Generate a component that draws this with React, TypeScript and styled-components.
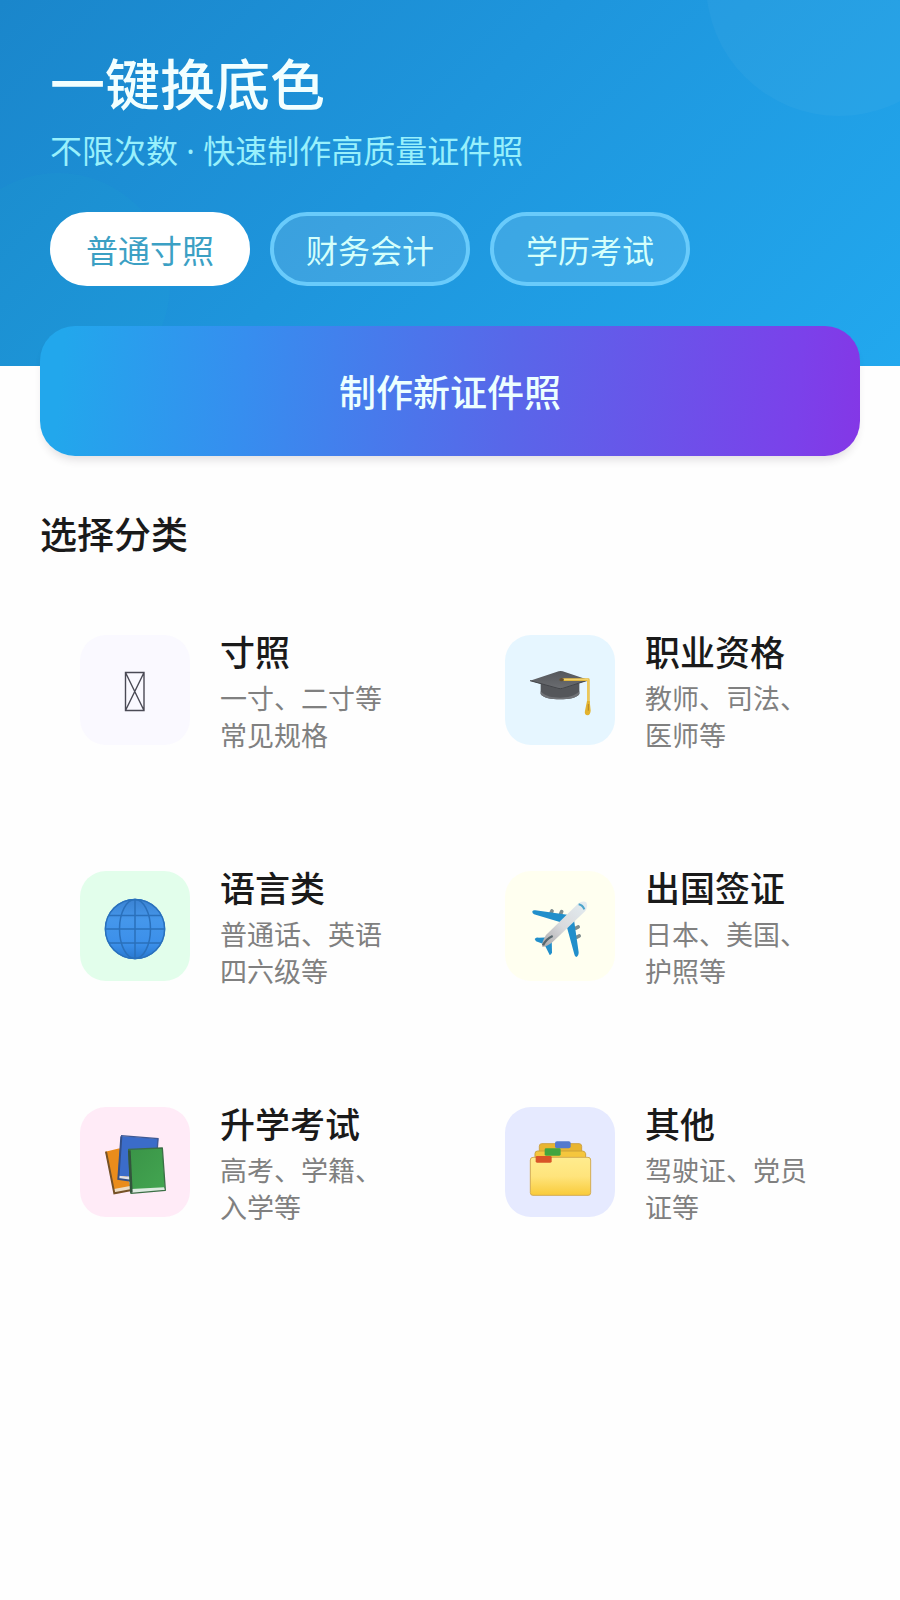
import React, { useState } from "react";
import styled, { createGlobalStyle } from "styled-components";

type Category = {
  id: string;
  title: string;
  description: string;
  background: string;
  icon: React.ReactNode;
};

type ChipProps = {
  $active: boolean;
};

type IconTileProps = {
  $background: string;
};

const GlobalStyle = createGlobalStyle`
  * {
    box-sizing: border-box;
  }

  body {
    margin: 0;
    background: #fefefe;
    color: #1a1a1a;
    font-family: "Noto Sans CJK SC", "Noto Sans", sans-serif;
  }

  button {
    font-family: inherit;
    cursor: pointer;
  }
`;

const Hero = styled.header`
  position: relative;
  overflow: hidden;
  padding: 48px 50px 80px;
  background: linear-gradient(135deg, #1a86cb 0%, #1e95dc 45%, #22a8ee 100%);

  &::before,
  &::after {
    content: "";
    position: absolute;
    border-radius: 50%;
  }

  &::before {
    top: -150px;
    right: -72px;
    width: 266px;
    height: 266px;
    background: rgba(255, 255, 255, 0.03);
  }

  &::after {
    left: -54px;
    bottom: -31px;
    width: 224px;
    height: 224px;
    background: rgba(60, 220, 200, 0.04);
  }
`;

const HeroContent = styled.div`
  position: relative;
  z-index: 1;
`;

const HeroTitle = styled.h1`
  margin: 0;
  font-size: 55px;
  font-weight: 500;
  line-height: 66px;
  color: #f2ffff;
`;

const HeroSubtitle = styled.p`
  margin: 14px 0 38px;
  font-family: "Noto Sans", "Noto Sans CJK SC", sans-serif;
  font-size: 32px;
  line-height: 46px;
  color: #98f0fc;
`;

const Chips = styled.div`
  display: flex;
  flex-wrap: wrap;
  gap: 20px;
`;

const Chip = styled.button<ChipProps>`
  padding: 0 32px;
  border: 4px solid ${(props) => (props.$active ? "#ffffff" : "#69cbfb")};
  border-radius: 37px;
  background: ${(props) => (props.$active ? "#ffffff" : "rgba(255, 255, 255, 0.13)")};
  color: ${(props) => (props.$active ? "#3ba0c4" : "#d4fffb")};
  font-size: 32px;
  line-height: 66px;
`;

const Main = styled.main`
  position: relative;
  z-index: 1;
  margin-top: -40px;
  padding: 0 40px 40px;
`;

const CreateButton = styled.button`
  display: block;
  width: 100%;
  padding: 0;
  border: 0;
  border-radius: 35px;
  background: linear-gradient(
    95deg,
    #22a7ec 3%,
    #368eef 25%,
    #5867e9 57%,
    #7b41ea 92%,
    #8437e6 100%
  );
  box-shadow: 0 7px 8px -3px rgba(60, 40, 60, 0.14);
  color: #ecffff;
  font-size: 37px;
  font-weight: 500;
  line-height: 130px;
`;

const SectionTitle = styled.h2`
  margin: 50px 0 26px;
  font-size: 37px;
  font-weight: 500;
  line-height: 55px;
`;

const CategoryGrid = styled.nav`
  display: grid;
  grid-template-columns: repeat(2, 1fr);
  gap: 30px;
`;

const CategoryCard = styled.a`
  display: flex;
  align-items: center;
  gap: 30px;
  padding: 40px;
  color: inherit;
  text-decoration: none;
`;

const IconTile = styled.span<IconTileProps>`
  display: flex;
  flex-shrink: 0;
  align-items: center;
  justify-content: center;
  width: 110px;
  height: 110px;
  border-radius: 26px;
  background: ${(props) => props.$background};

  svg {
    width: 64px;
    height: 64px;
    overflow: visible;
  }
`;

const CardText = styled.div`
  min-width: 0;
`;

const CardTitle = styled.h3`
  margin: 0 0 4px;
  font-size: 35px;
  font-weight: 500;
  line-height: 48px;
`;

const CardDescription = styled.p`
  margin: 0;
  font-size: 27px;
  line-height: 37px;
  color: #808080;
`;

const EmptyGlyphIcon = () => (
  <svg viewBox="0 -1 64 64" fill="none" stroke="#4a4a55" strokeWidth="1.4" aria-hidden="true">
    <path d="M22.5 13.5h18.5v38h-18.5zM22.5 13.5l18.5 38M41 13.5l-18.5 38" />
  </svg>
);

const GraduationIcon = () => (
  <svg viewBox="84 84 192 192" aria-hidden="true">
    <defs>
      <linearGradient id="cap" x1="0" y1="0" x2="0" y2="1">
        <stop offset="0" stopColor="#55575b" />
        <stop offset="1" stopColor="#6b6d71" />
      </linearGradient>
    </defs>
    <path d="M122 160v32c8 12 32 16 58 16s50-4 58-16v-32z" fill="#54565a" />
    <path d="M122 184c14 16 36 19 58 19s44-4 58-19v8c-8 12-32 16-58 16s-50-4-58-16z" fill="#707276" />
    <path d="M90 152 176 124q6-2 12 0l78 26-78 26q-7 2-14 0z" fill="url(#cap)" />
    <path d="M90 152 174 175q7 2 14 0l78-25" fill="none" stroke="#434549" strokeWidth="3" />
    <path d="M186 149h79v70" fill="none" stroke="#e3b83f" strokeWidth="8" strokeLinejoin="round" />
    <path d="M190 148h74v66" fill="none" stroke="#f6d875" strokeWidth="3" />
    <ellipse cx="185" cy="149" rx="7" ry="5" fill="#66502f" />
    <path d="M261 213h8l3 29q-1 12-9 14-11-2-8-14z" fill="#e3b32f" />
    <path d="M265 222v20" stroke="#b2852b" strokeWidth="3" />
  </svg>
);

const GlobeIcon = () => (
  <svg viewBox="0 -3 64 64" aria-hidden="true">
    <defs>
      <linearGradient id="globe" x1="0" y1="0" x2="0" y2="1">
        <stop offset="0" stopColor="#3b82d2" />
        <stop offset="0.35" stopColor="#4597eb" />
        <stop offset="0.75" stopColor="#3b8fea" />
        <stop offset="1" stopColor="#2877ce" />
      </linearGradient>
    </defs>
    <circle cx="32" cy="32" r="30.300" fill="url(#globe)" />
    <g fill="none" stroke="#2a70bb" strokeWidth="1.500">
      <circle cx="32" cy="32" r="29.600" />
      <ellipse cx="32" cy="32" rx="15.500" ry="29.400" />
      <path d="M32 2.500v59M2.500 32h59M6 18.500h52M6 46h52" />
    </g>
  </svg>
);

const PlaneIcon = () => (
  <svg viewBox="84 87 192 192" aria-hidden="true">
    <defs>
      <linearGradient id="fuselage" x1="1" y1="0" x2="0" y2="1">
        <stop offset="0" stopColor="#e4edf1" />
        <stop offset="0.55" stopColor="#d9dadd" />
        <stop offset="1" stopColor="#aaa8aa" />
      </linearGradient>
    </defs>
    <g fill="#7f8d8e">
      <rect x="149" y="132" width="11" height="18" rx="5" transform="rotate(25 154 141)" />
      <rect x="178" y="134" width="11" height="18" rx="5" transform="rotate(25 183 143)" />
      <rect x="226" y="178" width="11" height="18" rx="5" transform="rotate(65 231 187)" />
      <rect x="229" y="205" width="11" height="18" rx="5" transform="rotate(65 234 214)" />
    </g>
    <path d="M97 139q2-4 9-3l96 13-20 23-80-24q-6-3-5-9z" fill="#218fcb" />
    <path d="M200 184 222 164 236 262q0 11-7 14-5-1-6-8z" fill="#218fcb" />
    <path d="M104 222q5-5 12-4l38-1-18 22-28-10z" fill="#218fcb" />
    <path d="M133 238 155 220 156 262q-2 9-7 8z" fill="#218fcb" />
    <path d="M138 210 234 116q14-10 25-4 6 12-3 26L158 231q-20 16-31 14-5-8 11-35z" fill="url(#fuselage)" />
    <path d="M236 118q12 2 17 15" fill="none" stroke="#4ba5cb" strokeWidth="6" />
    <path d="M129 241q10-20 29-28" fill="none" stroke="#56666c" strokeWidth="7" />
  </svg>
);

const BooksIcon = () => (
  <svg viewBox="84 89 192 192" aria-hidden="true">
    <defs>
      <linearGradient id="green-book" x1="0" y1="0" x2="1" y2="1">
        <stop offset="0" stopColor="#3a9447" />
        <stop offset="1" stopColor="#43a551" />
      </linearGradient>
    </defs>
    <path d="M91 154 134 144 166 260 120 280z" fill="#ea8c1b" />
    <path d="M117 266 165 257v14l-45 10z" fill="#ecdcc4" />
    <path d="M93 154 118 279 166 270" fill="none" stroke="#765127" strokeWidth="6" />
    <path d="M138 107 250 115 240 236 129 226z" fill="#3b6cc9" />
    <path d="M130 226 170 230v11l-40-4z" fill="#e2e2e6" />
    <path d="M139 108 130 236 168 241" fill="none" stroke="#344f86" strokeWidth="6" />
    <path d="M138 106 249 115 247 145" fill="none" stroke="#3f5994" strokeWidth="4" />
    <path d="M161 148 262 144 270 264 169 268z" fill="url(#green-book)" />
    <path d="M169 266 268 261v9l-99 7z" fill="#dcebe0" />
    <path d="M161 147 262 143 271 270 168 279z" fill="none" stroke="#3a6f45" strokeWidth="4" strokeLinejoin="round" />
    <path d="M163 150 169 277" stroke="#33553c" strokeWidth="8" />
  </svg>
);

const FolderIcon = () => (
  <svg viewBox="84 89 192 192" aria-hidden="true">
    <defs>
      <linearGradient id="folder" x1="0" y1="0" x2="0" y2="1">
        <stop offset="0" stopColor="#ffec8e" />
        <stop offset="0.5" stopColor="#ffe47c" />
        <stop offset="1" stopColor="#f9cb3a" />
      </linearGradient>
    </defs>
    <path d="M118 170V138q0-8 7-8h112q8 0 8 8v32z" fill="#e9b530" stroke="#cfa345" strokeWidth="3" />
    <rect x="165" y="123" width="47" height="21" rx="6" fill="#5379ce" />
    <path d="M105 175V160q0-8 8-8h134q8 0 10 8v15z" fill="#f5c63d" stroke="#cca23b" strokeWidth="3" />
    <rect x="134" y="144" width="48" height="22" rx="4" fill="#42a53f" />
    <path d="M91 179q0-8 8-8h165q8 0 8 8v98q0 8-8 8H99q-8 0-8-8z" fill="url(#folder)" stroke="#d3ac55" strokeWidth="3" />
    <rect x="107" y="167" width="48" height="20" rx="4" fill="#d95427" />
  </svg>
);

const tabs = ["普通寸照", "财务会计", "学历考试"];

const categories: Category[] = [
  {
    id: "photo",
    title: "寸照",
    description: "一寸、二寸等常见规格",
    background: "#faf9ff",
    icon: <EmptyGlyphIcon />,
  },
  {
    id: "career",
    title: "职业资格",
    description: "教师、司法、医师等",
    background: "#e6f6ff",
    icon: <GraduationIcon />,
  },
  {
    id: "language",
    title: "语言类",
    description: "普通话、英语四六级等",
    background: "#e2feeb",
    icon: <GlobeIcon />,
  },
  {
    id: "visa",
    title: "出国签证",
    description: "日本、美国、护照等",
    background: "#fffff0",
    icon: <PlaneIcon />,
  },
  {
    id: "school",
    title: "升学考试",
    description: "高考、学籍、入学等",
    background: "#ffebf7",
    icon: <BooksIcon />,
  },
  {
    id: "other",
    title: "其他",
    description: "驾驶证、党员证等",
    background: "#e6eaff",
    icon: <FolderIcon />,
  },
];

const App: React.FC = () => {
  const [activeTab, setActiveTab] = useState(tabs[0]);

  return (
    <>
      <GlobalStyle />
      <Hero>
        <HeroContent>
          <HeroTitle>一键换底色</HeroTitle>
          <HeroSubtitle>不限次数 · 快速制作高质量证件照</HeroSubtitle>
          <Chips>
            {tabs.map((tab) => (
              <Chip
                key={tab}
                type="button"
                $active={tab === activeTab}
                aria-pressed={tab === activeTab}
                onClick={() => setActiveTab(tab)}
              >
                {tab}
              </Chip>
            ))}
          </Chips>
        </HeroContent>
      </Hero>
      <Main>
        <CreateButton type="button">制作新证件照</CreateButton>
        <SectionTitle>选择分类</SectionTitle>
        <CategoryGrid>
          {categories.map((category) => (
            <CategoryCard key={category.id} href={`#${category.id}`}>
              <IconTile $background={category.background}>{category.icon}</IconTile>
              <CardText>
                <CardTitle>{category.title}</CardTitle>
                <CardDescription>{category.description}</CardDescription>
              </CardText>
            </CategoryCard>
          ))}
        </CategoryGrid>
      </Main>
    </>
  );
};

export default App;
